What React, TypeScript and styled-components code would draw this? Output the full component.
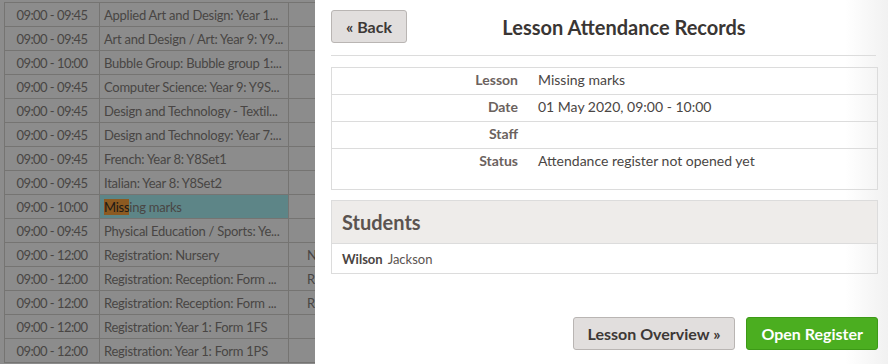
import styled, { createGlobalStyle } from "styled-components"

const GlobalStyle = createGlobalStyle`
  html, body {
    margin: 0;
    padding: 0;
    height: 100%;
    overflow: hidden;
    background: #fff;
  }
  body {
    font-family: Lato, "Open Sans", sans-serif;
    color: #333;
  }
`

const Page = styled.div`
  position: relative;
  width: 888px;
  height: 364px;
  overflow: hidden;
`

const TimetablePane = styled.div`
  width: 315px;
  overflow: hidden;
`

const Timetable = styled.table`
  margin: 2px 0 0 4px;
  width: 400px;
  table-layout: fixed;
  border-collapse: collapse;
  font-size: 13px;
  color: #857f7c;
  td {
    height: 23px;
    padding: 0;
    border: 1px solid #d6d3d0;
    white-space: nowrap;
    overflow: hidden;
  }
`

const TimeCell = styled.td`
  width: 94px;
  text-align: center;
  letter-spacing: -0.55px;
`

const LessonCell = styled.td<{ $active?: boolean }>`
  width: 184px;
  padding-left: 4px !important;
  letter-spacing: -0.25px;
  background: ${(p) => (p.$active ? "#a9f3f6" : "transparent")};
`

const RoomCell = styled.td`
  padding-left: 18px !important;
`

const Mark = styled.span`
  background: #ffa43c;
  color: #3a3028;
`

const Backdrop = styled.div`
  position: absolute;
  inset: 0;
  background: rgba(0, 0, 0, 0.45);
`

const Drawer = styled.aside`
  position: absolute;
  top: 0;
  left: 315px;
  right: 0;
  bottom: 0;
  background: linear-gradient(to right, #fff 0, #fff 530px, #f1f1f1 100%);
  display: flex;
  flex-direction: column;
  padding: 10px 10px 14px 16px;
  box-sizing: border-box;
`

const Header = styled.div`
  display: flex;
  align-items: center;
  padding-bottom: 12px;
  border-bottom: 1px solid #dcdcdc;
  margin-right: 2px;
`

const Button = styled.button<{ $primary?: boolean }>`
  font-family: inherit;
  font-size: 16px;
  font-weight: 700;
  height: 33px;
  padding: 0 14px;
  border-radius: 3px;
  cursor: pointer;
  color: ${(p) => (p.$primary ? "#fff" : "#3d3836")};
  background: ${(p) => (p.$primary ? "#4bae20" : "#e1dedd")};
  border: 1px solid ${(p) => (p.$primary ? "#3d9a17" : "#b9b5b3")};
`

const Title = styled.h1`
  flex: 1;
  margin: 0;
  padding-right: 35px;
  text-align: center;
  font-size: 20px;
  font-weight: 700;
  color: #3a3634;
`

const Panel = styled.div<{ $gap: number }>`
  margin-top: ${(p) => p.$gap}px;
  border: 1px solid #dcdcdc;
`

const InfoRow = styled.div<{ $tall?: boolean }>`
  display: grid;
  grid-template-columns: 186px 1fr;
  column-gap: 20px;
  align-items: start;
  height: ${(p) => (p.$tall ? "37px" : "23px")};
  padding-top: 3px;
  font-size: 14px;
  & + & {
    border-top: 1px solid #dcdcdc;
  }
`

const Label = styled.span`
  text-align: right;
  font-weight: 700;
  color: #6b625e;
`

const Value = styled.span`
  color: #4a4644;
`

const StudentsHead = styled.h2`
  margin: 0;
  height: 42px;
  display: flex;
  align-items: center;
  padding-left: 10px;
  font-size: 20px;
  font-weight: 700;
  color: #5a5350;
  background: #eeecea;
  border-bottom: 1px solid #dcdcdc;
`

const StudentRow = styled.div`
  height: 29px;
  display: flex;
  align-items: center;
  gap: 5px;
  padding-left: 10px;
  font-size: 13px;
  color: #5a5350;
  b {
    color: #4a4442;
  }
`

const Footer = styled.div`
  margin-top: auto;
  display: flex;
  justify-content: flex-end;
  gap: 11px;
`

const rows: [string, string, string?][] = [
  ["09:00 - 09:45", "Applied Art and Design: Year 1..."],
  ["09:00 - 09:45", "Art and Design / Art: Year 9: Y9..."],
  ["09:00 - 10:00", "Bubble Group: Bubble group 1:..."],
  ["09:00 - 09:45", "Computer Science: Year 9: Y9S..."],
  ["09:00 - 09:45", "Design and Technology - Textil..."],
  ["09:00 - 09:45", "Design and Technology: Year 7:..."],
  ["09:00 - 09:45", "French: Year 8: Y8Set1"],
  ["09:00 - 09:45", "Italian: Year 8: Y8Set2"],
  ["09:00 - 10:00", "Missing marks"],
  ["09:00 - 09:45", "Physical Education / Sports: Ye..."],
  ["09:00 - 12:00", "Registration: Nursery", "Nursery"],
  ["09:00 - 12:00", "Registration: Reception: Form ...", "Reception"],
  ["09:00 - 12:00", "Registration: Reception: Form ...", "Reception"],
  ["09:00 - 12:00", "Registration: Year 1: Form 1FS"],
  ["09:00 - 12:00", "Registration: Year 1: Form 1PS"],
]

const info: [string, string][] = [
  ["Lesson", "Missing marks"],
  ["Date", "01 May 2020, 09:00 - 10:00"],
  ["Staff", ""],
  ["Status", "Attendance register not opened yet"],
]

const App = () => {
  return (
    <Page>
      <GlobalStyle />
      <TimetablePane>
        <Timetable>
          <tbody>
            {rows.map(([time, lesson, room], i) => {
              const active = lesson === "Missing marks"
              return (
                <tr key={i}>
                  <TimeCell>{time}</TimeCell>
                  <LessonCell $active={active}>
                    {active ? (
                      <>
                        <Mark>Miss</Mark>ing marks
                      </>
                    ) : (
                      lesson
                    )}
                  </LessonCell>
                  <RoomCell>{room ?? ""}</RoomCell>
                </tr>
              )
            })}
          </tbody>
        </Timetable>
      </TimetablePane>
      <Backdrop />
      <Drawer>
        <Header>
          <Button>« Back</Button>
          <Title>Lesson Attendance Records</Title>
        </Header>
        <Panel $gap={11}>
          {info.map(([k, v], i) => (
            <InfoRow key={k} $tall={i === info.length - 1}>
              <Label>{k}</Label>
              <Value>{v}</Value>
            </InfoRow>
          ))}
        </Panel>
        <Panel $gap={10}>
          <StudentsHead>Students</StudentsHead>
          <StudentRow>
            <b>Wilson</b>
            <span>Jackson</span>
          </StudentRow>
        </Panel>
        <Footer>
          <Button>Lesson Overview »</Button>
          <Button $primary>Open Register</Button>
        </Footer>
      </Drawer>
    </Page>
  )
}

export default App
